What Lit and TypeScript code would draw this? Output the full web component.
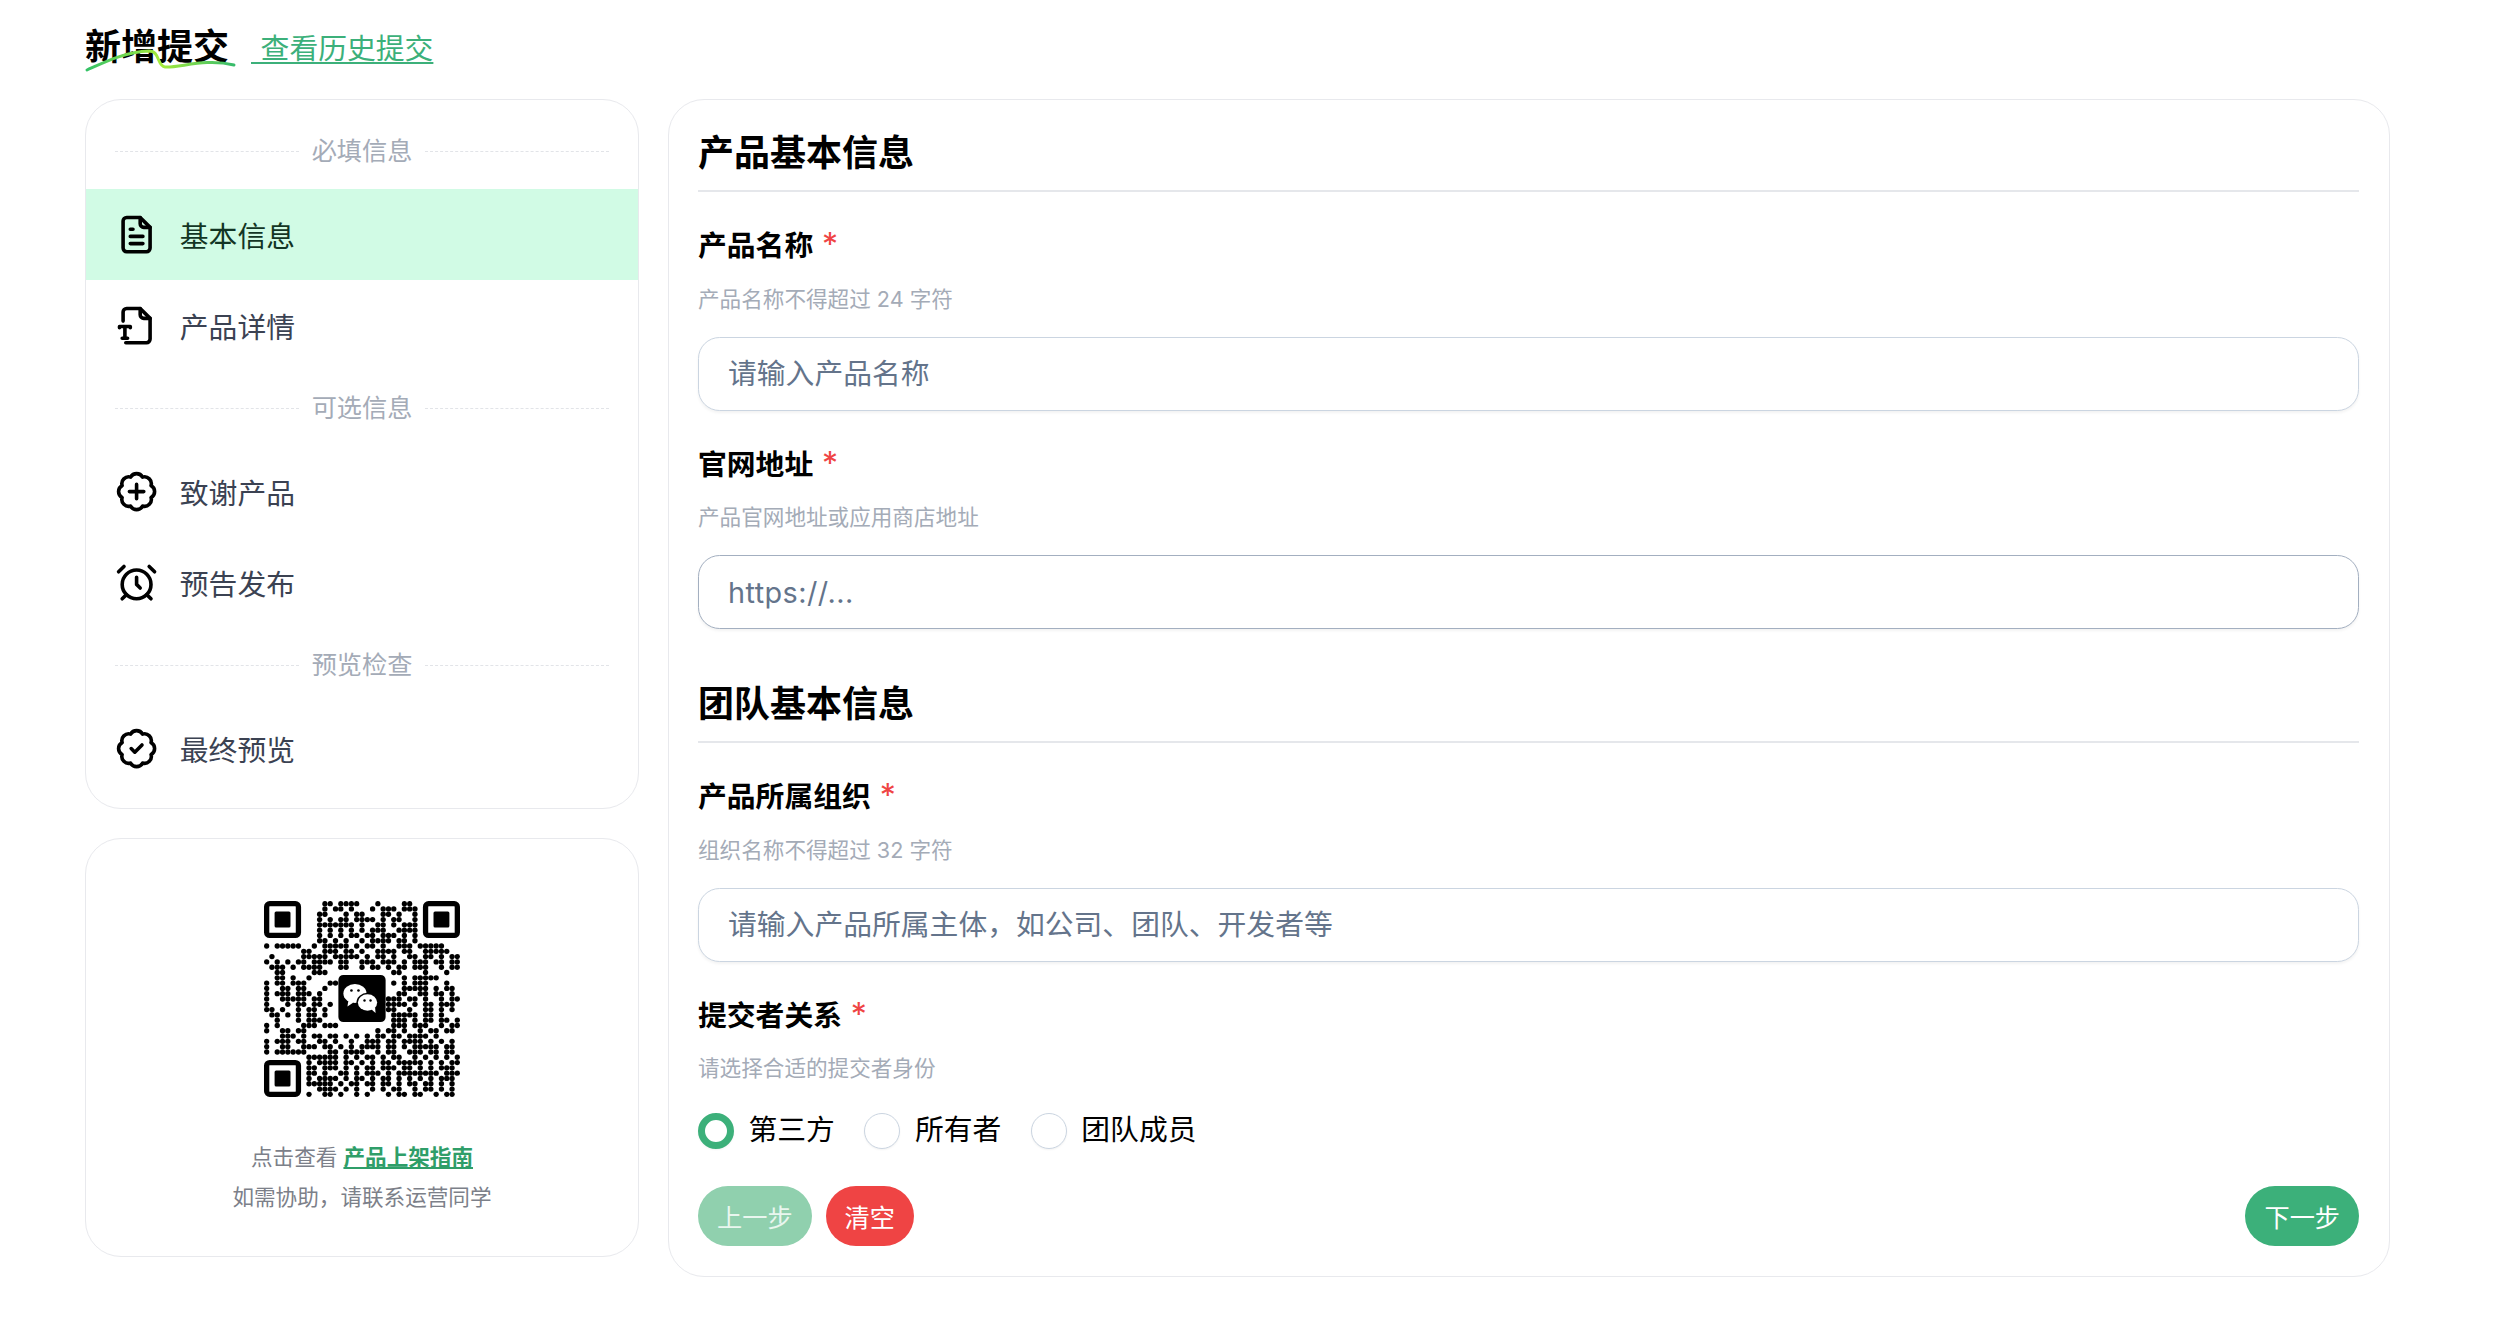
import { LitElement, html, css, svg } from "lit";
import { customElement } from "lit/decorators.js";

const QR = [
  "...........##.####...#....##.........",
  "...........#.##.#...#.###.###........",
  "..........##...#.##...##.#..##.......",
  "..........#.#.##.####.#.##..##.......",
  "..........#######.#..##.#.####.......",
  "..........#.#.#.#.#.###..#####.......",
  "..........#.#.#.##.##.###.#.#........",
  "..........##.#.#..#.####.##.#........",
  "#.#####..#.#####.#.##.#..###.#####...",
  ".......##..###.##.#..####.##..#####..",
  ".#.....#####.#####.#.##.#..##.##.#.##",
  "#.#.#.##.####.##..###.###.#.###.##.##",
  ".###.#.####...##..#.##.#.##.###..#.##",
  "..##.....###............##....#...#..",
  "..##.#..#.............#...#.#####....",
  "#.##.###....##........#.#.#.###...#..",
  "#..##.##...#..........#...#####.#.##.",
  "#.###.###.#...........#..##..##.##.#.",
  "#..#####.##............###.##.#..#.##",
  "#...#.##.##.#..........####.#.##.###.",
  "##.#..#.##.#...........##..#..##.#.#.",
  ".##.#.#.##.#............#####.##.#...",
  "..#...#.###.............###.#.##.##.#",
  "#.#....###.###..........###.###..#.##",
  "#..##.##.............#.##.#..#.##.##.",
  "...###.#.##.##.#.#.#.##.##.####.#....",
  "#.###.##..##.#..#..###.##.####.#.#.#.",
  "#..##..###.##.#.#.####.##.#.#####.##.",
  "#.######....##.####..#.##..###.##.##.",
  "........######.#.#.##.#.##..#.#.#.#.#",
  "........#.####.##.#.#.##.#####.#.#.##",
  "........##.###.#.#.##.###.##.#.#.###.",
  "........##.#..##.#.###.#.########.###",
  "........#.####.#.##.#.##.#.#.#.#.###.",
  "........#####.#.##.##.##.#.##.##.#.#.",
  "..........####.#.#..#.#.##..#.##.#.#.",
  "........#..##.#..#.#...#.##.##..#.##.",
];

function badgePath(): string {
  const n = 8;
  const r = 8.7;
  const pts: [number, number][] = [];
  for (let i = 0; i < n; i++) {
    const a = (Math.PI * 2 * i) / n + Math.PI / 8;
    pts.push([12 + r * Math.cos(a), 12 + r * Math.sin(a)]);
  }
  let d = `M${pts[0][0].toFixed(2)} ${pts[0][1].toFixed(2)}`;
  for (let i = 1; i <= n; i++) {
    const p = pts[i % n];
    d += `A3.8 3.8 0 0 1 ${p[0].toFixed(2)} ${p[1].toFixed(2)}`;
  }
  return d + "Z";
}

const icon = (content: unknown) => html`<svg class="ic" viewBox="0 0 24 24" fill="none" stroke="currentColor" stroke-width="2" stroke-linecap="round" stroke-linejoin="round">${content}</svg>`;

const icons = {
  doc: icon(svg`<path d="M14 2.5H6.5a2 2 0 0 0-2 2v15a2 2 0 0 0 2 2h11a2 2 0 0 0 2-2V8z"/><path d="M14 2.5V6a2 2 0 0 0 2 2h3.5"/><path d="M8.5 9h1.5M8.5 13h7M8.5 17h7"/>`),
  text: icon(svg`<path d="M4.5 9.5v-5a2 2 0 0 1 2-2H14L19.5 8v11.5a2 2 0 0 1-2 2H6"/><path d="M14 2.5V6a2 2 0 0 0 2 2h3.5"/><path d="M2.5 13.2v-.7h6v.7M5.5 12.5V19M4 19h3"/>`),
  plus: icon(svg`<path d=${badgePath()}/><path d="M12 8v8M8 12h8"/>`),
  alarm: icon(svg`<circle cx="12" cy="13" r="8"/><path d="M12 9v4l2 2"/><path d="M5 3 2 6M22 6l-3-3M6.38 18.7 4 21M17.64 18.67 20 21"/>`),
  check: icon(svg`<path d=${badgePath()}/><path d="m9 12 2 2 4-4"/>`),
};

@customElement("app-root")
export class AppRoot extends LitElement {
  static styles = css`
    :host {
      display: block;
      font-family: Inter, "Noto Sans CJK SC", sans-serif;
      color: #000;
      background: #fff;
      min-height: 1336px;
    }
    * { box-sizing: border-box; }
    .page { width: 2390px; padding: 22px 0 40px 85px; }
    .head { display: flex; align-items: center; height: 50px; margin-bottom: 27px; }
    .title { position: relative; font-size: 36px; line-height: 50px; font-weight: 700; width: 146px; white-space: nowrap; }
    .title svg { position: absolute; left: 0; top: 0; width: 160px; height: 60px; pointer-events: none; }
    .title span { position: relative; }
    .link { margin-left: 20px; font-size: 28.8px; line-height: 40px; color: #3cb07a; text-decoration: underline; text-decoration-thickness: 2px; text-underline-offset: 3px; position: relative; top: 1.5px; white-space: pre; word-spacing: 1.5px; }
    .cols { display: flex; gap: 29px; align-items: flex-start; }
    .left { width: 554px; display: flex; flex-direction: column; gap: 29px; flex: none; }
    .card { background: #fff; border: 1.8px solid #e8e9ed; border-radius: 36px; }
    .nav { padding: 14px 0; }
    .sep { height: 75px; padding: 0 29px; display: flex; align-items: center; gap: 13px; color: #a4abb7; font-size: 25.2px; line-height: 75px; }
    .sep::before, .sep::after { content: ""; flex: 1; border-top: 1.8px dashed #e2e4e8; }
    .item { height: 91px; padding-left: 29px; display: flex; align-items: center; gap: 21.6px; font-size: 28.8px; color: #3b4252; }
    .item.on { background: #d1fbe5; color: #123524; }
    .ic { width: 43.2px; height: 43.2px; color: #000; flex: none; }
    .qr { height: 419px; padding-top: 61.5px; display: flex; flex-direction: column; align-items: center; font-size: 21.6px; line-height: 40px; color: #7c8089; }
    .qr svg { width: 196px; height: 196px; margin-bottom: 40.5px; }
    .qr a { color: #2f9e69; font-weight: 700; text-decoration: underline; }
    .main { width: 1722px; padding: 25px 30px 30px 29px; flex: none; }
    h2 { margin: 0; font-size: 36px; line-height: 54px; font-weight: 700; padding: 1px 0 10px; border-bottom: 2px solid #e5e7eb; }
    h2.second { margin-top: 47px; }
    .label { margin-top: 32px; font-size: 28.8px; line-height: 43px; font-weight: 700; }
    .label i { color: #ef4444; font-style: normal; font-weight: 400; font-size: 32px; line-height: 30px; margin-left: 2px; }
    .hint { margin-top: 15.5px; font-size: 21.6px; line-height: 32px; color: #a4abb7; }
    input.text { display: block; width: 100%; height: 74px; margin-top: 22px; padding: 0 29px; font: inherit; font-size: 28.8px; border: 1.8px solid #cbd5e1; border-radius: 21.6px; box-shadow: 0 2px 3px rgba(0, 0, 0, 0.05); outline: none; background: #fff; }
    input.text::placeholder { color: #64748b; opacity: 1; }
    input.text.focus { border-color: #a3afc0; letter-spacing: 0.45px; }
    .radios { margin-top: 24.5px; height: 38px; display: flex; align-items: center; gap: 29.5px; font-size: 28.8px; }
    .radios label { display: flex; align-items: center; gap: 14.5px; }
    .radios input { appearance: none; margin: 7px 0 0; width: 36px; height: 36px; border-radius: 50%; border: 1.8px solid #cbd5e1; background: #fff; box-shadow: 0 1px 2px rgba(0, 0, 0, 0.05); }
    .radios input:checked { border: 7.2px solid #3cb07a; }
    .btns { margin-top: 39px; display: flex; gap: 14px; }
    button { height: 60px; padding: 0 19px; border: 0; border-radius: 30px; color: #fff; font: inherit; font-size: 25.2px; background: #3cb07a; }
    button.dim { background: #90d0ae; color: #e9f6ef; }
    button.red { background: #ef4444; }
    button.next { margin-left: auto; }
  `;

  private qr() {
    const m = 5.27;
    const inFinder = (r: number, c: number) =>
      (r < 8 && c < 8) || (r < 8 && c > 28) || (r > 28 && c < 8);
    const inLogo = (r: number, c: number) => r >= 14 && r <= 22 && c >= 14 && c <= 22;
    const dots = [];
    for (let r = 0; r < 37; r++) {
      for (let c = 0; c < 37; c++) {
        if (QR[r][c] === "#" && !inFinder(r, c) && !inLogo(r, c)) {
          dots.push(svg`<circle cx=${(c + 0.5) * m} cy=${(r + 0.5) * m} r="2.65"/>`);
        }
      }
    }
    const finder = (x: number, y: number) => svg`
      <rect x=${x + m / 2} y=${y + m / 2} width=${m * 6} height=${m * 6} rx="3" fill="none" stroke="#000" stroke-width=${m}/>
      <rect x=${x + m * 2} y=${y + m * 2} width=${m * 3} height=${m * 3} rx="1.5"/>`;
    return html`<svg viewBox="0 0 195 195" fill="#000">
      ${dots}
      ${finder(0, 0)}${finder(m * 30, 0)}${finder(0, m * 30)}
      <rect x="74" y="73.5" width="47" height="47" rx="5"/>
      <ellipse cx="90.5" cy="92" rx="11.5" ry="9.5" fill="#fff"/>
      <path d="M84 99l-1 6 6-4z" fill="#fff"/>
      <ellipse cx="103" cy="101" rx="11" ry="9.6" fill="#000"/>
      <ellipse cx="103" cy="101" rx="9.6" ry="8.2" fill="#fff"/>
      <path d="M107 108l4 3.5-.5-6z" fill="#fff"/>
      <circle cx="87" cy="89" r="1.3"/><circle cx="94" cy="89" r="1.3"/>
      <circle cx="100" cy="99" r="1.2"/><circle cx="106" cy="99" r="1.2"/>
    </svg>`;
  }

  private field(label: string, hint: string, placeholder: string, cls = "") {
    return html`
      <div class="label">${label} <i>*</i></div>
      <div class="hint">${hint}</div>
      <input class="text ${cls}" placeholder=${placeholder} />
    `;
  }

  render() {
    return html`
      <div class="page">
        <div class="head">
          <div class="title">
            <span>新增提交</span>
            <svg viewBox="0 0 160 60" fill="none">
              <defs>
                <linearGradient id="wave" x1="0" x2="1" y1="0" y2="0">
                  <stop offset="0" stop-color="#35c267" />
                  <stop offset="0.5" stop-color="#a6ec3c" />
                  <stop offset="1" stop-color="#37bb6b" />
                </linearGradient>
              </defs>
              <path d="M2 48C20 40 40 30 64 29C75 29 72 44 80 45C95 46 120 36 149 43" stroke="url(#wave)" stroke-width="3" stroke-linecap="round" />
            </svg>
          </div>
          <span class="link">&nbsp;查看历史提交</span>
        </div>
        <div class="cols">
          <div class="left">
            <div class="card nav">
              <div class="sep">必填信息</div>
              <div class="item on">${icons.doc}基本信息</div>
              <div class="item">${icons.text}产品详情</div>
              <div class="sep">可选信息</div>
              <div class="item">${icons.plus}致谢产品</div>
              <div class="item">${icons.alarm}预告发布</div>
              <div class="sep">预览检查</div>
              <div class="item">${icons.check}最终预览</div>
            </div>
            <div class="card qr">
              ${this.qr()}
              <div>点击查看 <a>产品上架指南</a></div>
              <div>如需协助，请联系运营同学</div>
            </div>
          </div>
          <div class="card main">
            <h2>产品基本信息</h2>
            ${this.field("产品名称", "产品名称不得超过 24 字符", "请输入产品名称")}
            ${this.field("官网地址", "产品官网地址或应用商店地址", "https://...", "focus")}
            <h2 class="second">团队基本信息</h2>
            ${this.field("产品所属组织", "组织名称不得超过 32 字符", "请输入产品所属主体，如公司、团队、开发者等")}
            <div class="label">提交者关系 <i>*</i></div>
            <div class="hint">请选择合适的提交者身份</div>
            <div class="radios">
              <label><input type="radio" name="rel" checked />第三方</label>
              <label><input type="radio" name="rel" />所有者</label>
              <label><input type="radio" name="rel" />团队成员</label>
            </div>
            <div class="btns">
              <button class="dim">上一步</button>
              <button class="red">清空</button>
              <button class="next">下一步</button>
            </div>
          </div>
        </div>
      </div>
    `;
  }
}
